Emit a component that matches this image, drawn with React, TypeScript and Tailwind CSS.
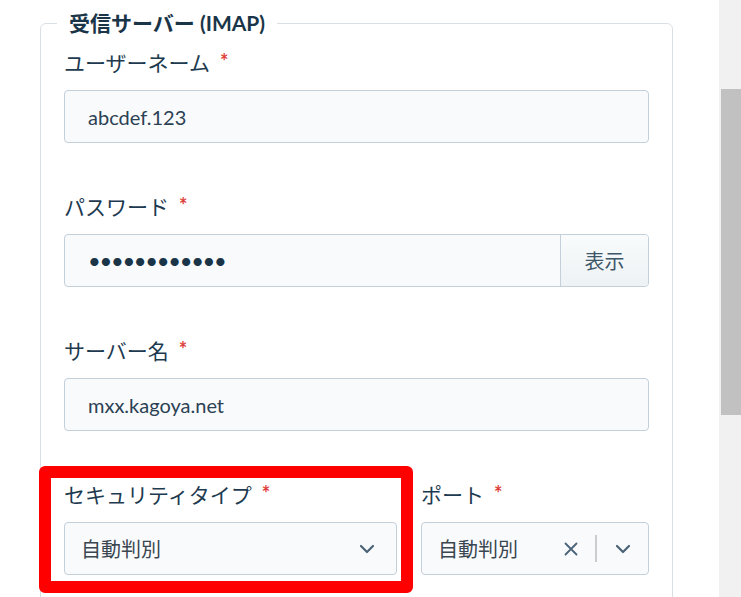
import React from "react";

function Label({ text }: { text: string }) {
  return (
    <div className="flex items-start h-[28px] text-[21px] leading-[28px] text-[#1e3a4f]">
      <span>{text}</span>
      <span className="ml-[10px] text-[20px] leading-[24px] font-bold text-[#e0403a]">*</span>
    </div>
  );
}

function Chevron() {
  return (
    <svg width="24" height="24" viewBox="0 0 24 24" fill="none" stroke="#4a6376" strokeWidth="2.2" strokeLinecap="round" strokeLinejoin="round">
      <path d="M6 9l6 6 6-6" />
    </svg>
  );
}

export default function App() {
  return (
    <div className="w-[741px] h-[597px] overflow-hidden flex bg-white font-['Lato','Noto_Sans_CJK_JP',sans-serif]">
      <div className="flex-1 pl-[40px] pr-[46px] pt-[9px]">
        <fieldset className="border border-[#d8e0e6] rounded-md pl-4 pr-4 pt-3 pb-10">
          <legend className="px-3 text-[21px] leading-[28px] font-bold text-[#1b3548]">受信サーバー (IMAP)</legend>
          <div className="pl-[7px] pr-[7px] flex flex-col gap-[50px]">
            <div>
              <Label text="ユーザーネーム" />
              <div className="mt-[13px] h-[53px] rounded border border-[#c3cfd9] bg-[#f8fafc] px-[23px] flex items-center text-[20px] text-[#2c4153]">
                abcdef.123
              </div>
            </div>
            <div>
              <Label text="パスワード" />
              <div className="mt-[13px] h-[53px] rounded border border-[#c3cfd9] bg-[#f8fafc] flex overflow-hidden">
                <div className="flex-1 px-[23px] flex items-center text-[22px] tracking-[-1.3px] text-[#1b3548]">
                  ••••••••••••
                </div>
                <div className="w-[88px] border-l border-[#c3cfd9] bg-gradient-to-b from-[#f9fbfc] to-[#edf2f4] flex items-center justify-center text-[20px] text-[#3d5668]">
                  表示
                </div>
              </div>
            </div>
            <div>
              <Label text="サーバー名" />
              <div className="mt-[13px] h-[53px] rounded border border-[#c3cfd9] bg-[#f8fafc] px-[23px] flex items-center text-[20px] text-[#2c4153]">
                mxx.kagoya.net
              </div>
            </div>
            <div className="grid grid-cols-[333px_228px] gap-x-6">
              <div className="relative">
                <Label text="セキュリティタイプ" />
                <div className="mt-[13px] h-[53px] rounded border border-[#c3cfd9] bg-[#f8fafc] pl-[16px] pr-[17px] flex items-center justify-between text-[20px] text-[#3a4650]">
                  <span>自動判別</span>
                  <Chevron />
                </div>
                <div className="absolute -left-[25px] -right-[16px] -top-[15px] -bottom-[18px] border-[12px] border-[#ff0000] rounded-[6px] pointer-events-none" />
              </div>
              <div>
                <Label text="ポート" />
                <div className="mt-[13px] h-[53px] rounded border border-[#c3cfd9] bg-[#f8fafc] pl-[16px] flex items-center text-[20px] text-[#3a4650]">
                  <span className="flex-1">自動判別</span>
                  <svg width="14" height="14" viewBox="0 0 14 14" fill="none" stroke="#4a6376" strokeWidth="1.8" strokeLinecap="round" className="mr-[17px]">
                    <path d="M1.5 1.5l11 11M12.5 1.5l-11 11" />
                  </svg>
                  <div className="w-[2px] h-[27px] bg-[#c9cdd0]" />
                  <div className="w-[51px] flex items-center justify-center">
                    <Chevron />
                  </div>
                </div>
              </div>
            </div>
          </div>
        </fieldset>
      </div>
      <div className="w-[22px] bg-[#f1f1f1] pl-[2px]">
        <div className="mt-[89px] h-[326px] bg-[#c1c1c1]" />
      </div>
    </div>
  );
}
